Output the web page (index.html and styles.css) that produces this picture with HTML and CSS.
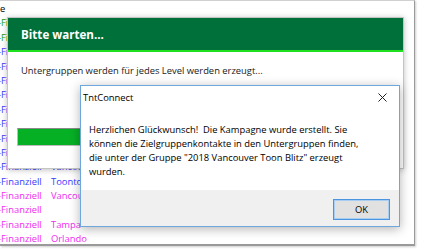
FILE: index.html
```html
<!DOCTYPE html>
<html lang="de">
<head>
  <meta charset="UTF-8">
  <meta name="viewport" content="width=device-width, initial-scale=1.0">
  <title>TntConnect</title>
  <link rel="stylesheet" href="styles.css">
</head>
<body>
  <div class="desktop">

    <!-- Group list behind the windows -->
    <div class="list-window">
      <div class="row plain"><span class="c1 first">e</span></div>
      <div class="row green"><span class="c1">-Finanziell</span><span class="c2">Calgary</span></div>
      <div class="row green"><span class="c1">-Finanziell</span><span class="c2">Calgary</span></div>
      <div class="row blue"><span class="c1">-Finanziell</span><span class="c2">Boston</span></div>
      <div class="row blue"><span class="c1">-Finanziell</span><span class="c2">Boston</span></div>
      <div class="row blue"><span class="c1">-Finanziell</span><span class="c2">Chicago</span></div>
      <div class="row blue"><span class="c1">-Finanziell</span><span class="c2">Chicago</span></div>
      <div class="row blue"><span class="c1">-Finanziell</span><span class="c2">Denver</span></div>
      <div class="row blue"><span class="c1">-Finanziell</span><span class="c2">Denver</span></div>
      <div class="row blue"><span class="c1">-Finanziell</span><span class="c2">Seattle</span></div>
      <div class="row blue"><span class="c1">-Finanziell</span><span class="c2">Vancouver</span></div>
      <div class="row blue"><span class="c1">-Finanziell</span><span class="c2">Vancouver</span></div>
      <div class="row blue"><span class="c1">-Finanziell</span><span class="c2">Toonto</span></div>
      <div class="row pink"><span class="c1">-Finanziell</span><span class="c2">Vancouver</span></div>
      <div class="row pink"><span class="c1">-Finanziell</span><span class="c2"></span></div>
      <div class="row pink"><span class="c1">-Finanziell</span><span class="c2">Tampa</span></div>
      <div class="row pink"><span class="c1">-Finanziell</span><span class="c2">Orlando</span></div>
    </div>

    <!-- Progress window -->
    <div class="wait-window">
      <div class="wait-header">Bitte warten...</div>
      <div class="wait-body">
        <p class="wait-text">Untergruppen werden für jedes Level werden erzeugt...</p>
        <div class="progress">
          <div class="progress-fill" style="width: 100%"></div>
        </div>
      </div>
    </div>

    <!-- Message box -->
    <div class="dialog">
      <div class="dialog-title">
        <span>TntConnect</span>
        <svg class="close" width="9" height="9" viewBox="0 0 9 9">
          <path d="M0.5 0.5 L8.5 8.5 M8.5 0.5 L0.5 8.5" stroke="#222" stroke-width="1" fill="none"/>
        </svg>
      </div>
      <div class="dialog-body">
        Herzlichen Glückwunsch!&nbsp; Die Kampagne wurde erstellt. Sie<br>
        können die Zielgruppenkontakte in den Untergruppen finden,<br>
        die unter der Gruppe "2018 Vancouver Toon Blitz" erzeugt<br>
        wurden.
      </div>
      <div class="dialog-footer">
        <button class="ok">OK</button>
      </div>
    </div>

  </div>
</body>
</html>
```

FILE: styles.css
```css
/* General */
body {
  margin: 0;
  background: #fff;
  color: #000;
  font-family: "Open Sans", "Noto Sans", sans-serif;
  font-size: 9.4px;
  overflow: hidden;
}

.desktop {
  position: relative;
  width: 426px;
  height: 251px;
}

/* Group list */
.list-window {
  width: 415px;
  height: 246px;
  box-sizing: border-box;
  padding-top: 1px;
  border-top: 1px solid #d0d0d0;
  border-right: 1px solid #9a9a9a;
  border-bottom: 2px solid #9a9a9a;
  box-shadow: 1px 1px 2px rgba(0, 0, 0, 0.2);
  overflow: hidden;
}

.row {
  display: flex;
  height: 14.4px;
  line-height: 14.4px;
  font-size: 9.4px;
  white-space: nowrap;
}

.row .c1 {
  width: 53px;
  margin-left: -2px;
}

.row .c1.first {
  margin-left: 0;
}

.row.green { color: #14a014; }
.row.blue { color: #3a3aff; }
.row.pink { color: #f02cf0; }

/* Progress window */
.wait-window {
  position: absolute;
  left: 7px;
  top: 17px;
  width: 397px;
  height: 152px;
  box-sizing: border-box;
  background: #fff;
  border: 1px solid #c4c4c4;
  box-shadow: 0 1px 6px rgba(0, 0, 0, 0.25);
}

.wait-header {
  height: 32px;
  display: flex;
  align-items: center;
  padding-left: 13px;
  background: #00703a;
  border-bottom: 2px solid #1ee01e;
  color: #fff;
  font-size: 11.6px;
  font-weight: bold;
}

.wait-body {
  padding: 12px 9px 0 9px;
}

.wait-text {
  margin: 0 0 0 4px;
  line-height: 14px;
  color: #1a1a1a;
}

.progress {
  margin-top: 50px;
  height: 18px;
  box-sizing: border-box;
  border: 1px solid #bcbcbc;
  border-top-color: #8a8a8a;
  background: #e6e6e6;
}

.progress-fill {
  height: 100%;
  background: #06b025;
}

/* Message box */
.dialog {
  position: absolute;
  left: 80px;
  top: 85px;
  width: 320px;
  height: 142px;
  box-sizing: border-box;
  display: flex;
  flex-direction: column;
  background: #fff;
  border: 1px solid #6ea6de;
  box-shadow: 0 2px 10px rgba(0, 0, 0, 0.3);
}

.dialog-title {
  height: 22px;
  display: flex;
  align-items: center;
  justify-content: space-between;
  padding: 0 12px 0 2px;
}

.dialog-body {
  flex: 1;
  padding: 15px 8px 0 8px;
  line-height: 14px;
  color: #000;
}

.dialog-footer {
  height: 36px;
  box-sizing: border-box;
  display: flex;
  justify-content: flex-end;
  align-items: flex-start;
  padding: 9px 9px 0 0;
  background: #f0f0f0;
}

.ok {
  width: 57px;
  height: 21px;
  padding: 0;
  background: #e1e1e1;
  border: 1px solid #4a94e0;
  box-shadow: inset 0 0 0 1px #a8cdf2;
  font-family: inherit;
  font-size: 9.4px;
  color: #000;
}
```
